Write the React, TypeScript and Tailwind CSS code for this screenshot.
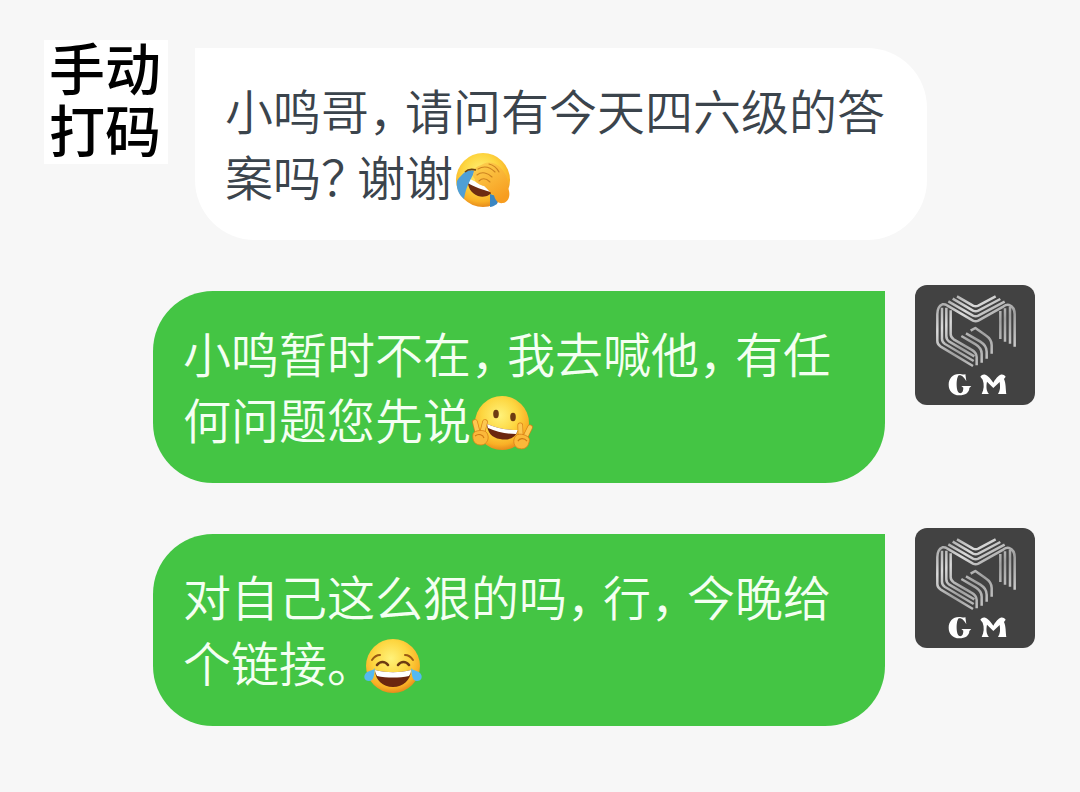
import type { ReactNode } from "react";

type Side = "in" | "out";

function Punct({ children }: { children: string }) {
  return <span className="inline-block w-9 [font-feature-settings:'halt']">{children}</span>;
}

function FaceShade({ id }: { id: string }) {
  return (
    <defs>
      <radialGradient id={id} cx="0.46" cy="0.36" r="0.66">
        <stop offset="0" stopColor="#fff27a" />
        <stop offset="0.5" stopColor="#fdd640" />
        <stop offset="0.82" stopColor="#f9b026" />
        <stop offset="1" stopColor="#e3841a" />
      </radialGradient>
      <linearGradient id={id + "-hand"} x1="0" y1="0" x2="0.6" y2="1">
        <stop offset="0" stopColor="#fdd352" />
        <stop offset="1" stopColor="#f79d1f" />
      </linearGradient>
    </defs>
  );
}

const emojiClass = "inline-block h-11 w-[60px] overflow-visible align-[-7px]";

function FacepalmEmoji() {
  return (
    <svg className={emojiClass} viewBox="0 8 60 44" role="img" aria-label="笑哭捂脸">
      <FaceShade id="palm" />
      <circle cx="30" cy="29" r="27" fill="url(#palm)" />
      <path d="M15 28 C22 33 32 37 41 38 C38 45 31 47 25 45 C18 42 14 36 15 28Z" fill="#6d2c12" />
      <path d="M15 27 C23 31 31 35 40 37 L38 41 C30 39 21 36 15 32Z" fill="#fff" />
      <path d="M12 21 C15 19 19 19 22 20 C18 28 13 35 11 48 C5 43 3 36 4 30 C6 26 9 24 12 21Z" fill="#4f9fd6" />
      <path d="M37 43 L46 46 L44 53 C41 55 39 56 37 56Z" fill="#3b86c2" />
      <path d="M21 20 C20 17 26 15 30 13 C36 10 43 12 47 16 C53 22 56 29 55 37 C58 43 56 51 50 52 C45 53 42 49 41 44 C37 42 35 38 31 35 C27 34 21 31 22 28 C19 26 20 23 21 20Z" fill="url(#palm-hand)" />
      <path d="M25 18 C32 14 37 16 42 21 M24 24 C29 20 35 22 39 26 M26 30 C30 26 34 28 37 31 M36 13 C40 14 44 17 46 21" fill="none" stroke="#cc8220" strokeWidth="1.1" strokeLinecap="round" />
      <path d="M12 21 C15 18 19 18 23 19" fill="none" stroke="#6d4213" strokeWidth="1.6" />
    </svg>
  );
}

function PeaceHand() {
  return (
    <g>
      <g fill="none" strokeLinecap="round">
        <path d="M8 42 L5 30 M12 42 L15 30" stroke="#d98218" strokeWidth="5.6" />
        <path d="M8 42 L5 30 M12 42 L15 30" stroke="#fdc850" strokeWidth="4.2" />
      </g>
      <path d="M3 42 C4 38 15 37 17 41 C20 46 17 53 11 53 C5 53 2 49 3 42Z" fill="#fbb83a" stroke="#d98218" strokeWidth="0.8" />
      <path d="M5 44 C9 41 13 43 14 46" fill="none" stroke="#cf7914" strokeWidth="1.1" />
    </g>
  );
}

function PeaceEmoji() {
  return (
    <svg className={emojiClass} viewBox="0 8 60 44" role="img" aria-label="开心比耶">
      <FaceShade id="peace" />
      <circle cx="31" cy="29" r="27" fill="url(#peace)" />
      <ellipse cx="25" cy="20" rx="2.8" ry="4.2" fill="#6d3b12" />
      <ellipse cx="42" cy="23" rx="2.8" ry="4.2" fill="#6d3b12" />
      <path d="M16 30 C25 34 35 36 47 36 C45 44 37 47 29 45 C21 44 16 38 16 30Z" fill="#6b260f" />
      <path d="M16 30 C25 34 35 36 47 36 L45 40 C36 40 25 38 17 34Z" fill="#fff" />
      <g transform="translate(-1 -2)">
        <PeaceHand />
      </g>
      <g transform="translate(61 2) scale(-1 1) rotate(-12 10 45)">
        <PeaceHand />
      </g>
    </svg>
  );
}

function JoyEmoji() {
  return (
    <svg className={emojiClass} viewBox="0 8 60 44" role="img" aria-label="笑哭">
      <FaceShade id="joy" />
      <circle cx="30" cy="29" r="27" fill="url(#joy)" />
      <path d="M9 23 C11 20 14 18 17 18 M42 18 C45 18 48 20 50 23" fill="none" stroke="#9a5a14" strokeWidth="2" strokeLinecap="round" />
      <path d="M14 28 C17 24 22 24 25 28 M35 28 C38 24 43 24 46 28" fill="none" stroke="#6d3b12" strokeWidth="2.6" strokeLinecap="round" />
      <path d="M12 33 C24 36 36 36 48 33 C48 43 40 50 30 50 C20 50 12 43 12 33Z" fill="#6b260f" />
      <path d="M12 33 C24 36 36 36 48 33 C48 36 47 37 46 39 C36 41 24 41 14 39 C13 37 12 35 12 33Z" fill="#fff" />
      <path d="M12 31 C11 38 11 44 6 44 C1 44 0 39 3 36 C6 33 10 34 12 31Z" fill="#55b9f0" />
      <path d="M48 31 C49 38 49 44 54 44 C59 44 60 39 57 36 C54 33 50 34 48 31Z" fill="#55b9f0" />
    </svg>
  );
}

function GmAvatar() {
  return (
    <svg className="size-[120px] shrink-0 rounded-xl bg-[#424242]" viewBox="30 30 360 360" role="img" aria-label="GM">
      <defs>
        <linearGradient id="metal" gradientUnits="userSpaceOnUse" x1="110" y1="70" x2="250" y2="270">
          <stop offset="0" stopColor="#a2a2a2" />
          <stop offset="0.3" stopColor="#dadada" />
          <stop offset="0.65" stopColor="#a0a0a0" />
          <stop offset="1" stopColor="#cacaca" />
        </linearGradient>
      </defs>
      <g fill="none" stroke="url(#metal)" strokeWidth="7.5" strokeLinejoin="round">
        <path d="M156 64 L204 92 Q212 96 220 92 L272 64" />
        <path d="M143 71 L204 107 Q212 111 220 107 L286 72" />
        <path d="M130 79 L204 122 Q212 126 220 122 L299 80" />
        <path d="M97 118 V198 Q97 208 106 214 L204 273 M97 118 Q97 94 112 88 Q120 87 126 91 L204 137 Q212 141 220 137 L296 94 Q304 88 312 90 Q329 96 329 118 V215" />
        <path d="M111 98 V191 Q111 201 120 207 L206 258" />
        <path d="M124 98 V184 Q124 194 133 200 L208 244" />
        <path d="M137 106 V177 Q137 187 146 193 L198 223 Q215 232 215 246 V271" />
        <path d="M169 183 L212 208 Q230 219 230 236 V263" />
        <path d="M183 175 L226 200 Q245 212 245 230 V251" />
        <path d="M197 167 L211 159 L242 181 Q260 193 260 210 V236" />
        <path d="M286 108 V192" />
        <path d="M300 100 V200" />
        <path d="M315 96 V206" />
      </g>
      <g fill="#fff">
        <path d="M181 297 L184 319 C176 304 168 300 162 301 C153 304 152 350 163 354 C171 356 175 350 175 338 L169 333 L199 333 L193 339 C193 353 181 361 163 361 C143 361 131 347 131 329 C131 311 143 297 162 297 C170 297 176 301 181 297Z" />
        <path d="M226 305 C235 293 247 297 265 323 C281 296 293 294 302 305 L297 312 C303 325 302 345 304 357 L279 357 C286 347 286 335 284 321 L265 339 L246 320 C243 335 244 348 252 357 L230 357 C237 343 238 328 233 314Z" />
      </g>
    </svg>
  );
}

function MaskedAvatar() {
  return (
    <div className="flex size-[124px] shrink-0 items-center justify-center bg-white pr-0.5 pb-2.5 text-center text-[56px] leading-[62px] font-medium text-black">
      <span>
        手动
        <br />
        打码
      </span>
    </div>
  );
}

function Message({ side, avatar, children }: { side: Side; avatar: ReactNode; children: ReactNode }) {
  const incoming = side === "in";
  return (
    <li className={incoming ? "flex items-start gap-[27px]" : "flex flex-row-reverse items-start gap-[30px]"}>
      {avatar}
      <p
        className={
          incoming
            ? "mt-2 max-w-[732px] rounded-[60px] rounded-tl-none bg-white px-[30px] pt-7 pb-8 text-[#3b444c]"
            : "mt-1.5 max-w-[732px] rounded-[60px] rounded-tr-none bg-[#44c544] px-[30px] pt-7 pb-8 text-[#f4fff2]"
        }
      >
        {children}
      </p>
    </li>
  );
}

export default function App() {
  return (
    <main className="min-h-screen bg-[#f7f7f7] pt-10 pr-[45px] pb-16 pl-11 font-['Noto_Sans_CJK_SC','Noto_Sans',sans-serif] text-[48px] leading-[66px] font-[350]">
      <ul className="flex flex-col gap-[45px]" lang="zh-CN">
        <Message side="in" avatar={<MaskedAvatar />}>
          小鸣哥<Punct>，</Punct>请问有今天四六级的答案吗<Punct>？</Punct>谢谢<FacepalmEmoji />
        </Message>
        <Message side="out" avatar={<GmAvatar />}>
          小鸣暂时不在<Punct>，</Punct>我去喊他<Punct>，</Punct>有任何问题您先说<PeaceEmoji />
        </Message>
        <Message side="out" avatar={<GmAvatar />}>
          对自己这么狠的吗<Punct>，</Punct>行<Punct>，</Punct>今晚给个链接<Punct>。</Punct>
          <JoyEmoji />
        </Message>
      </ul>
    </main>
  );
}
